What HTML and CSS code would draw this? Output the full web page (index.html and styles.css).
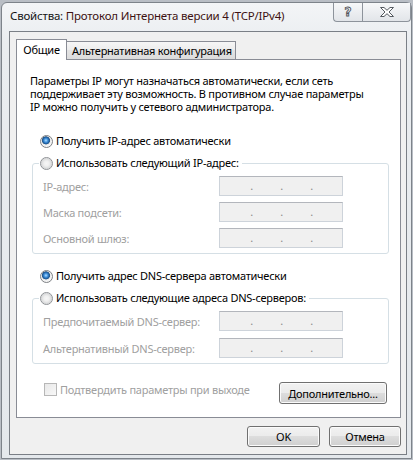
FILE: index.html
```html
<!DOCTYPE html>
<html lang="ru">
<head>
<meta charset="utf-8">
<title>Свойства: Протокол Интернета версии 4 (TCP/IPv4)</title>
<link rel="stylesheet" href="styles.css">
</head>
<body>
<div class="window">
  <div class="titlebar">
    <div class="title"><span class="t1">Свойства:</span> <span class="t2">Протокол Интернета версии 4 (TCP/IPv4)</span></div>
    <div class="caption">
      <div class="cbtn help"><span class="qmark">?</span></div>
      <div class="cbtn close">
        <svg width="14" height="10" viewBox="0 0 14 10"><polygon points="0.5,0.5 4,0.5 7,3.3 10,0.5 13.5,0.5 9,5 13.5,9.5 10,9.5 7,6.7 4,9.5 0.5,9.5 5,5" fill="#fff" stroke="#555a60" stroke-width="1" stroke-linejoin="round"/></svg>
      </div>
    </div>
  </div>
  <div class="client">
    <div class="tabs">
      <div class="tab active">Общие</div>
      <div class="tab inactive">Альтернативная конфигурация</div>
    </div>
    <div class="panel">
      <p class="desc">Параметры IP могут назначаться автоматически, если сеть<br>поддерживает эту возможность. В противном случае параметры<br>IP можно получить у сетевого администратора.</p>
      <div class="opt"><span class="radio checked"></span>Получить IP-адрес автоматически</div>
      <fieldset class="group">
        <legend><span class="opt"><span class="radio"></span>Использовать следующий IP-адрес:</span></legend>
        <div class="row"><span class="lbl">IP-адрес:</span><span class="ip"><span>.</span><span>.</span><span>.</span></span></div>
        <div class="row"><span class="lbl">Маска подсети:</span><span class="ip"><span>.</span><span>.</span><span>.</span></span></div>
        <div class="row"><span class="lbl">Основной шлюз:</span><span class="ip"><span>.</span><span>.</span><span>.</span></span></div>
      </fieldset>
      <div class="opt opt-dns"><span class="radio checked"></span>Получить адрес DNS-сервера автоматически</div>
      <fieldset class="group group-dns">
        <legend><span class="opt"><span class="radio"></span>Использовать следующие адреса DNS-серверов:</span></legend>
        <div class="row"><span class="lbl">Предпочитаемый DNS-сервер:</span><span class="ip"><span>.</span><span>.</span><span>.</span></span></div>
        <div class="row"><span class="lbl">Альтернативный DNS-сервер:</span><span class="ip"><span>.</span><span>.</span><span>.</span></span></div>
      </fieldset>
      <div class="bottom">
        <div class="check"><span class="box"></span>Подтвердить параметры при выходе</div>
        <button class="btn adv">Дополнительно...</button>
      </div>
    </div>
    <div class="actions">
      <button class="btn ok">OK</button>
      <button class="btn cancel">Отмена</button>
    </div>
  </div>
</div>
</body>
</html>
```
FILE: styles.css
```css
* { box-sizing: border-box; }
html, body { margin: 0; padding: 0; }
body {
  width: 413px;
  height: 460px;
  overflow: hidden;
  background: #b9bec5;
  font-family: "Noto Sans", "Open Sans", sans-serif;
  font-size: 11px;
  letter-spacing: -0.25px;
  color: #000;
}
.window {
  margin: 2px 0 0 1px;
  width: 411px;
  height: 457px;
  border: 1px solid #7d838a;
  border-radius: 6px 6px 0 0;
  background: linear-gradient(#f3f5f7, #eaedf0 40px, #e4e8ec);
  display: flex;
  flex-direction: column;
}
.titlebar {
  height: 28px;
  display: flex;
  justify-content: space-between;
  align-items: flex-start;
  flex: none;
}
.title {
  margin: 5px 0 0 8px;
  font-size: 11.5px;
  letter-spacing: -0.2px;
  line-height: 15px;
  white-space: nowrap;
}
.t1 { color: #141414; }
.t2 { color: #3e1212; }
.caption { display: flex; margin-right: 0; }
.cbtn {
  height: 19px;
  border: 1px solid #8d939b;
  border-top: none;
  background: linear-gradient(#f7f8f9, #eceef1 50%, #e2e5e9);
  display: flex;
  align-items: center;
  justify-content: center;
}
.help { width: 29px; border-right: none; border-radius: 0 0 0 4px; }
.close { width: 49px; border-radius: 0 0 4px 0; }
.qmark {
  font-family: "DejaVu Sans", sans-serif;
  font-weight: bold;
  font-size: 12px;
  line-height: 12px;
  letter-spacing: 0;
  color: #fff;
  -webkit-text-stroke: 0.9px #50555b;
}
.client {
  margin: 0 4px 0 7px;
  border: 1px solid #7a7f86;
  background: #f0f0f0;
  padding: 7px 5px 7px 6px;
}
.tabs { display: flex; align-items: flex-end; }
.tab {
  border: 1px solid #898c95;
  border-bottom: none;
  line-height: 15px;
  white-space: nowrap;
}
.tab.active {
  width: 51px;
  height: 21px;
  margin-bottom: -1px;
  padding-top: 2px;
  text-align: center;
  background: #fff;
  position: relative;
  z-index: 1;
}
.tab.inactive {
  width: 170px;
  height: 18px;
  margin-left: -1px;
  padding: 1px 0 0 5px;
  background: linear-gradient(#f6f6f6, #ececec 50%, #e3e3e3 50%, #dcdcdc);
}
.panel {
  background: #fff;
  border: 1px solid #898c95;
  padding: 14px 11px 13px 13px;
}
.desc {
  margin: 0;
  line-height: 13px;
  white-space: nowrap;
}
.opt {
  display: flex;
  align-items: center;
  line-height: 16px;
  height: 16px;
  margin: 20px 0 0 10px;
  white-space: nowrap;
}
.opt-dns { margin-top: 14px; }
legend .opt { margin: 0; }
.radio {
  width: 13px;
  height: 13px;
  flex: none;
  margin-right: 3px;
  border-radius: 50%;
  border: 1px solid #8f9296;
  background: radial-gradient(circle, #f6f6f6 0, #f0f0f0 2.5px, #d9dadb 5px, #eeeeee 5.5px);
}
.radio.checked {
  border-color: #7d8084;
  background: radial-gradient(circle at 45% 40%, #b3e0ff 0, #4c9be3 1.6px, #1d5fa3 3.2px, #2c5a86 3.8px, #e6e7e8 4.3px, #f5f5f5 5.5px);
}
.group {
  margin: 6px 0 0 2px;
  padding: 5px 10px 5px 10px;
  border: 1px solid #d5dfe5;
  border-radius: 3px;
  min-width: 0;
}
.group legend {
  padding: 0 3px 0 1px;
  margin-left: -4px;
  line-height: 16px;
}
.row {
  display: flex;
  align-items: center;
  height: 20px;
}
.row + .row { margin-top: 6px; }
.group-dns .row + .row { margin-top: 7px; }
.lbl {
  width: 176px;
  flex: none;
  color: #a0a0a0;
  white-space: nowrap;
}
.ip {
  width: 124px;
  height: 20px;
  flex: none;
  border: 1px solid #cdd3da;
  border-top-color: #b3b6bc;
  background: #f0f0f0;
  display: flex;
  align-items: flex-start;
  padding: 2px 0 0 30px;
  gap: 27px;
  color: #8a8a8a;
}
.ip span { width: 3px; line-height: 14px; text-align: center; }
.bottom {
  display: flex;
  justify-content: space-between;
  align-items: flex-start;
  margin-top: 18px;
  padding: 0 2px 0 14px;
}
.check {
  display: flex;
  align-items: center;
  margin-top: 1px;
  line-height: 13px;
  color: #a0a0a0;
  white-space: nowrap;
}
.box {
  width: 13px;
  height: 13px;
  margin-right: 3px;
  border: 1px solid #b7b7b7;
  background: linear-gradient(135deg, #e8e8e8, #f8f8f8);
}
.btn {
  font: inherit;
  letter-spacing: inherit;
  color: #000;
  padding: 0;
  border: 1px solid #707070;
  border-radius: 3px;
  background: linear-gradient(#f2f2f2, #ebebeb 50%, #dddddd 50%, #cfcfcf);
  box-shadow: inset 0 0 0 1px #fbfbfb;
  line-height: 15px;
}
.adv { width: 108px; height: 22px; }
.actions {
  display: flex;
  justify-content: flex-end;
  gap: 9px;
  margin-top: 8px;
}
.ok { width: 73px; height: 21px; }
.cancel { width: 72px; height: 21px; }
```
